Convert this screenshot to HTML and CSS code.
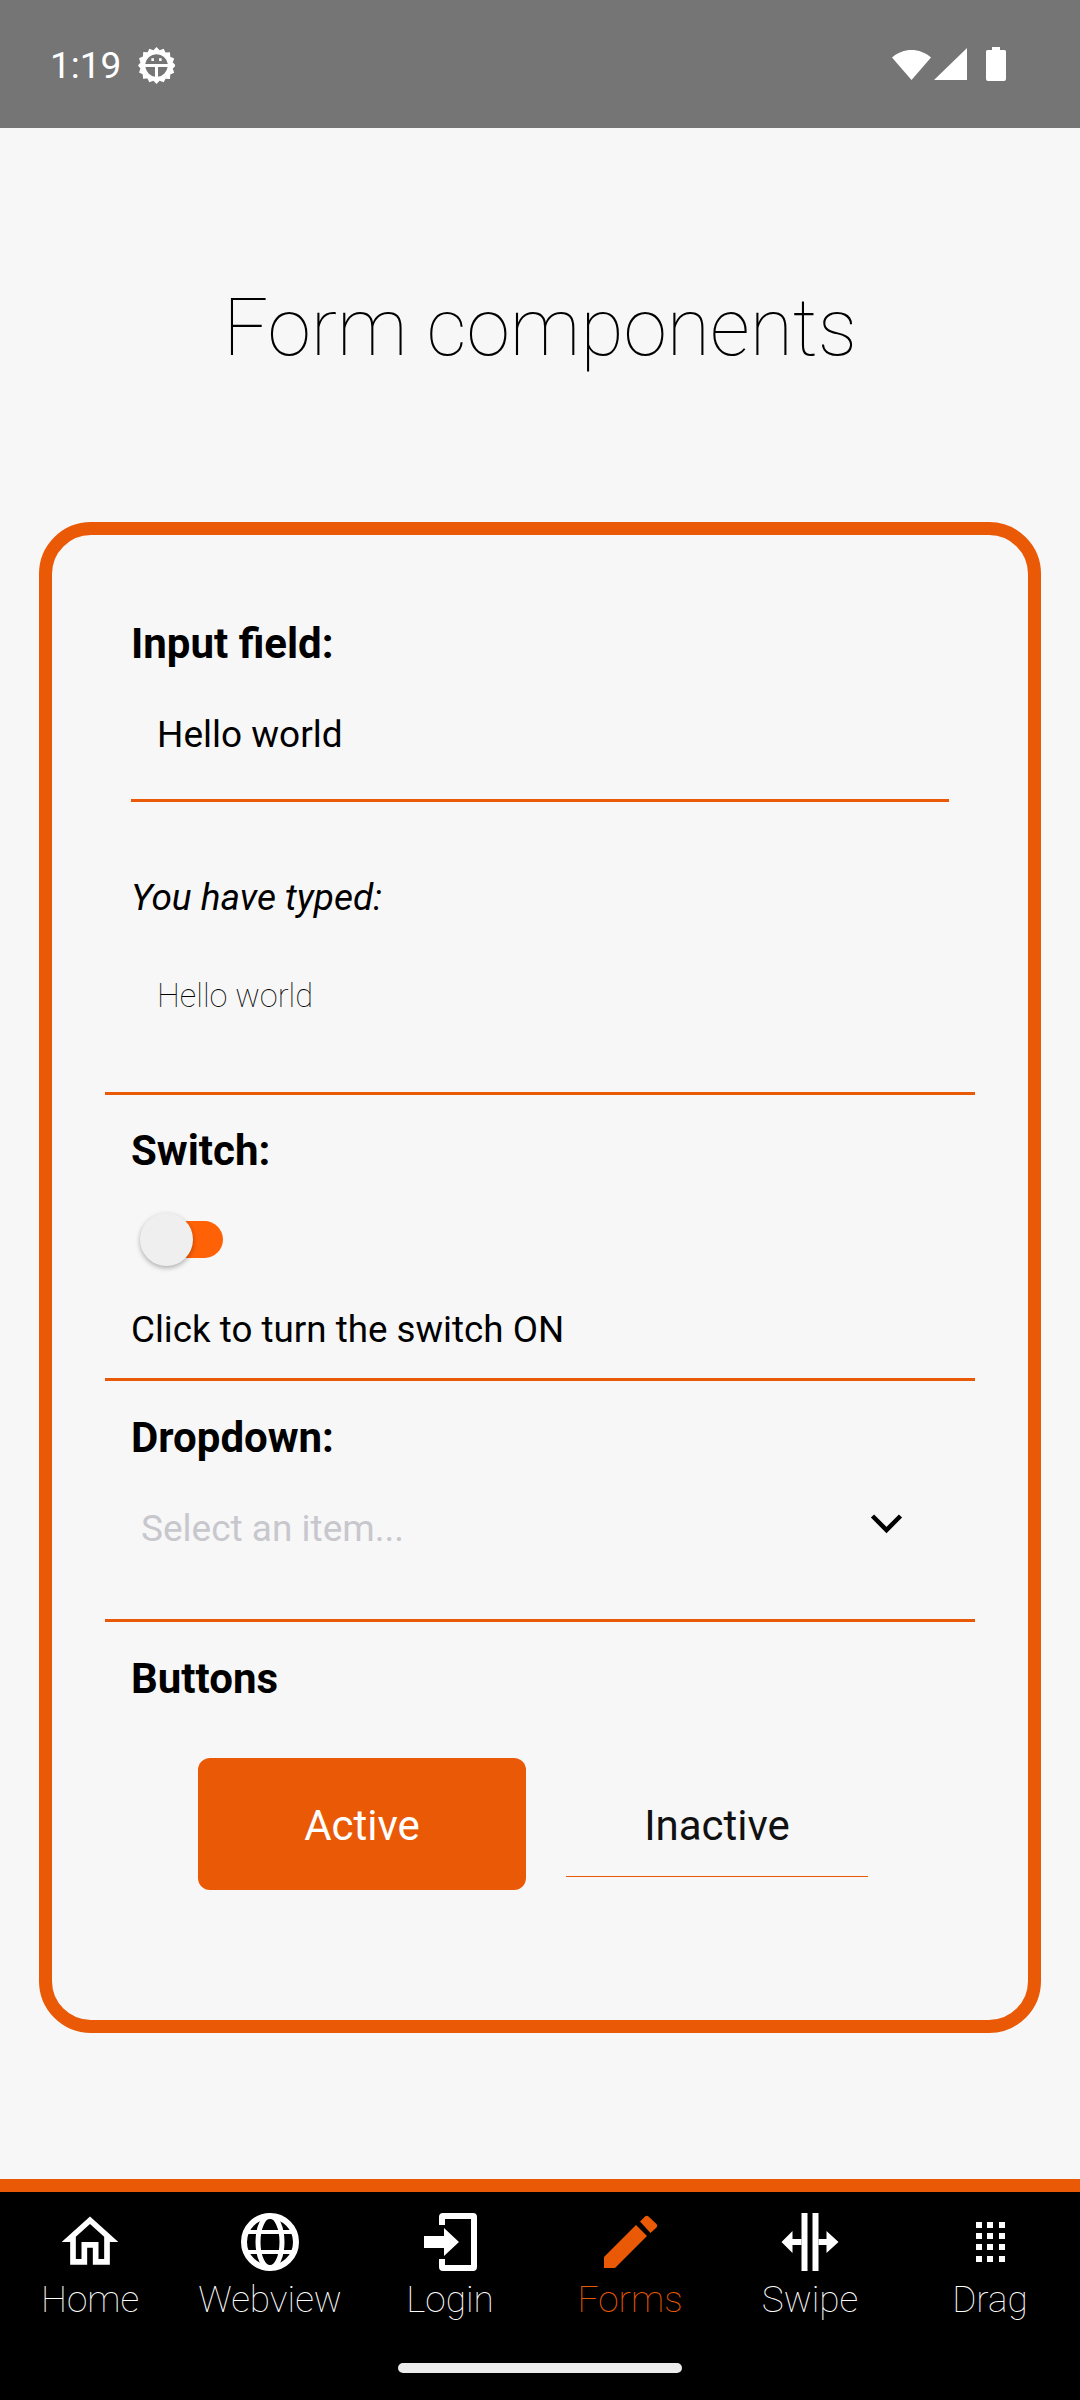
FILE: index.html
```html
<!DOCTYPE html>
<html lang="en">
<head>
<meta charset="utf-8">
<title>Form components</title>
<link rel="stylesheet" href="styles.css">
</head>
<body>
<div class="screen">
  <header class="status">
    <div class="status-left">
      <span class="time">1:19</span>
      <svg class="gear" viewBox="0 0 36 36"><path fill="#fff" fill-rule="evenodd" d="M18 0l3 3.200 4-1.600 1.800 3.800 4.300-.3.3 4.300 3.800 1.800-1.400 4 3.200 2.800-3.200 3 1.400 4-3.800 1.800-.3 4.300-4.300-.3L25 34.400l-4-1.600L18 36l-3-3.200-4 1.600-1.800-3.800-4.300.3-.3-4.300L1 24.800l1.400-4L0 18l2.400-3-1.400-4 3.800-1.800.3-4.300 4.300.3L11 1.600l4 1.600zM18 7A11 11 0 0 0 7 16.500h22A11 11 0 0 0 18 7zM7.200 19.500A11 11 0 0 0 16.500 28.900v-9.400zM19.500 19.500v9.400A11 11 0 0 0 28.800 19.500zM13 11h2.500v2.500H13zM20.500 11H23v2.500h-2.500z"/></svg>
    </div>
    <div class="status-right">
      <svg class="wifi" viewBox="0 0 39 33"><path fill="#fff" d="M19.500 33L0 10.500C11 .5 28 .5 39 10.500z"/></svg>
      <svg class="signal" viewBox="0 0 33 32"><path fill="#fff" d="M33 0v32H0z"/></svg>
      <svg class="battery" viewBox="0 0 20 34"><path fill="#fff" d="M6 0h8v3h4.500A1.500 1.500 0 0 1 20 4.500V32a2 2 0 0 1-2 2H2a2 2 0 0 1-2-2V4.500A1.500 1.500 0 0 1 1.500 3H6z"/></svg>
    </div>
  </header>

  <main class="content">
    <h1 class="title">Form components</h1>
    <section class="card">
      <div class="block block-input">
        <div class="label">Input field:</div>
        <div class="input">Hello world</div>
        <div class="typed-label">You have typed:</div>
        <div class="typed-value">Hello world</div>
      </div>
      <div class="block block-switch">
        <div class="label">Switch:</div>
        <div class="switch-row">
          <div class="switch"><span class="track"></span><span class="thumb"></span></div>
        </div>
        <div class="switch-text">Click to turn the switch ON</div>
      </div>
      <div class="block block-dropdown">
        <div class="label">Dropdown:</div>
        <div class="dropdown">
          <span class="placeholder">Select an item...</span>
          <svg class="chevron" viewBox="0 0 32 20"><path fill="none" stroke="#000" stroke-width="4.500" d="M2 2l14 14L30 2"/></svg>
        </div>
      </div>
      <div class="block block-buttons">
        <div class="label">Buttons</div>
        <div class="buttons">
          <div class="btn-active">Active</div>
          <div class="btn-inactive">Inactive</div>
        </div>
      </div>
    </section>
  </main>

  <nav class="tabs">
    <div class="tab">
      <svg class="tab-icon" viewBox="0 0 24 24"><path fill="#fff" d="M12 5.690l5 4.500V18h-2v-6H9v6H7v-7.810l5-4.500M12 3L2 12h3v8h6v-6h2v6h6v-8h3L12 3z"/></svg>
      <span class="tab-text">Home</span>
    </div>
    <div class="tab">
      <svg class="tab-icon" viewBox="0 0 68 68"><g fill="none" stroke="#fff"><circle cx="34" cy="34" r="26" stroke-width="6"/><ellipse cx="34" cy="34" rx="12" ry="26" stroke-width="5"/><path stroke-width="4" d="M8 24h52M8 44h52"/></g></svg>
      <span class="tab-text">Webview</span>
    </div>
    <div class="tab">
      <svg class="tab-icon" viewBox="0 0 68 68"><path fill="#fff" d="M23 17V9a4 4 0 0 1 4-4h30a4 4 0 0 1 4 4v50a4 4 0 0 1-4 4H27a4 4 0 0 1-4-4v-8h6v6h26V11H29v6z"/><path fill="#fff" d="M8 28h20v-8l15 14-15 14v-8H8z"/></svg>
      <span class="tab-text">Login</span>
    </div>
    <div class="tab tab-on">
      <svg class="tab-icon" viewBox="0 0 68 68"><path fill="#ea5906" d="M8 49l32-32 11 11-32 32H8z"/><path fill="#ea5906" d="M44 13.500l5-5a2.500 2.500 0 0 1 3.500 0l8 7.500a2.500 2.500 0 0 1 0 3.500L54.500 25z"/></svg>
      <span class="tab-text">Forms</span>
    </div>
    <div class="tab">
      <svg class="tab-icon" viewBox="0 0 68 68"><path fill="#fff" d="M25.500 5h6v58h-6zM36.500 5h6v58h-6z"/><path fill="#fff" d="M5.500 34l11-11v8h9v6h-9v8zM62.500 34l-12-11v8h-8v6h8v8z"/></svg>
      <span class="tab-text">Swipe</span>
    </div>
    <div class="tab">
      <svg class="tab-icon" viewBox="0 0 68 68"><path fill="#fff" d="M20 14h6v6h-6zM31 14h6v6h-6zM43 14h6v6h-6zM20 25h6v6h-6zM31 25h6v6h-6zM43 25h6v6h-6zM20 36h6v6h-6zM31 36h6v6h-6zM43 36h6v6h-6zM20 48h6v6h-6zM31 48h6v6h-6zM43 48h6v6h-6z"/></svg>
      <span class="tab-text">Drag</span>
    </div>
    <div class="home-bar"></div>
  </nav>
</div>
</body>
</html>
```

FILE: styles.css
```css
* { box-sizing: border-box; }
html, body { margin: 0; padding: 0; }
body { width: 1080px; height: 2400px; overflow: hidden; font-family: Roboto, "Liberation Sans", sans-serif; background: #f7f7f7; color: #000; }
.screen { width: 1080px; height: 2400px; display: flex; flex-direction: column; }

.status { height: 128px; flex: none; background: #757575; display: flex; justify-content: space-between; align-items: flex-start; padding: 47px 74px 0 50px; }
.status-left { display: flex; align-items: center; gap: 17px; }
.time { color: #fff; font-size: 37px; line-height: 36px; }
.gear { width: 37px; height: 37px; display: block; }
.status-right { display: flex; align-items: flex-start; gap: 3px; }
.wifi { width: 39px; height: 33px; display: block; }
.signal { width: 33px; height: 32px; display: block; margin-top: 1px; }
.battery { width: 20px; height: 34px; display: block; margin-left: 16px; }

.content { flex: 1; display: flex; flex-direction: column; padding: 0 39px; }
.title { margin: 0; height: 394px; padding-top: 144px; text-align: center; font-weight: 100; font-size: 78.75px; line-height: 112px; color: #000; }

.card { height: 1511px; border: 13px solid #ea5906; border-radius: 52px; padding: 0 53px; display: flex; flex-direction: column; }
.block { border-bottom: 3px solid #ea5906; padding: 0 26px; flex: none; }
.block-input { height: 560px; padding-top: 85px; }
.block-switch { height: 286px; padding-top: 32px; }
.block-dropdown { height: 241px; padding-top: 33px; }
.block-buttons { border-bottom: 0; padding-top: 33px; }

.label { font-weight: 700; font-size: 42px; line-height: 48px; }
.input { margin-top: 34px; height: 100px; padding: 0 26px; font-size: 37px; line-height: 66px; border-bottom: 3px solid #ea5906; }
.typed-label { margin-top: 72px; font-style: italic; font-size: 37px; line-height: 48px; }
.typed-value { margin-top: 54px; padding: 0 26px; font-size: 32.5px; font-weight: 100; line-height: 40px; color: #000; }

.switch-row { margin-top: 38px; height: 54px; display: flex; align-items: center; }
.switch { position: relative; width: 83px; height: 54px; margin-left: 9px; }
.track { position: absolute; left: 12px; top: 8px; width: 71px; height: 37px; border-radius: 19px; background: #ff6106; }
.thumb { position: absolute; left: 0; top: 0; width: 53px; height: 53px; border-radius: 50%; background: #efefef; box-shadow: 0 2px 5px rgba(0, 0, 0, .3); }
.switch-text { margin-top: 39px; font-size: 36.75px; line-height: 48px; }

.dropdown { margin-top: 43px; display: flex; justify-content: space-between; align-items: center; padding: 0 46px 0 10px; height: 48px; }
.placeholder { font-size: 37px; line-height: 48px; color: #c7c7cd; }
.chevron { width: 33px; height: 20px; display: block; margin-bottom: 11px; }

.buttons { margin-top: 55px; display: flex; align-items: flex-start; padding-left: 67px; gap: 40px; }
.btn-active { width: 328px; height: 132px; border-radius: 12px; background: #ea5906; color: #fff; font-size: 42px; line-height: 136px; text-align: center; }
.btn-inactive { width: 302px; height: 119px; border-bottom: 1px solid #ea5906; font-size: 42px; line-height: 136px; text-align: center; color: #111; }

.tabs { position: relative; height: 221px; flex: none; background: #000; border-top: 13px solid #ea5906; display: grid; grid-template-columns: repeat(6, 180px); align-items: start; padding-top: 16px; }
.tab { display: flex; flex-direction: column; align-items: center; }
.tab-icon { width: 68px; height: 68px; display: block; }
.tab-text { font-size: 37px; line-height: 48px; font-weight: 100; color: #fff; }
.tab-on .tab-text { color: #ea5906; }
.home-bar { position: absolute; left: 398px; top: 171px; width: 284px; height: 10px; border-radius: 5px; background: #ececec; }
```
